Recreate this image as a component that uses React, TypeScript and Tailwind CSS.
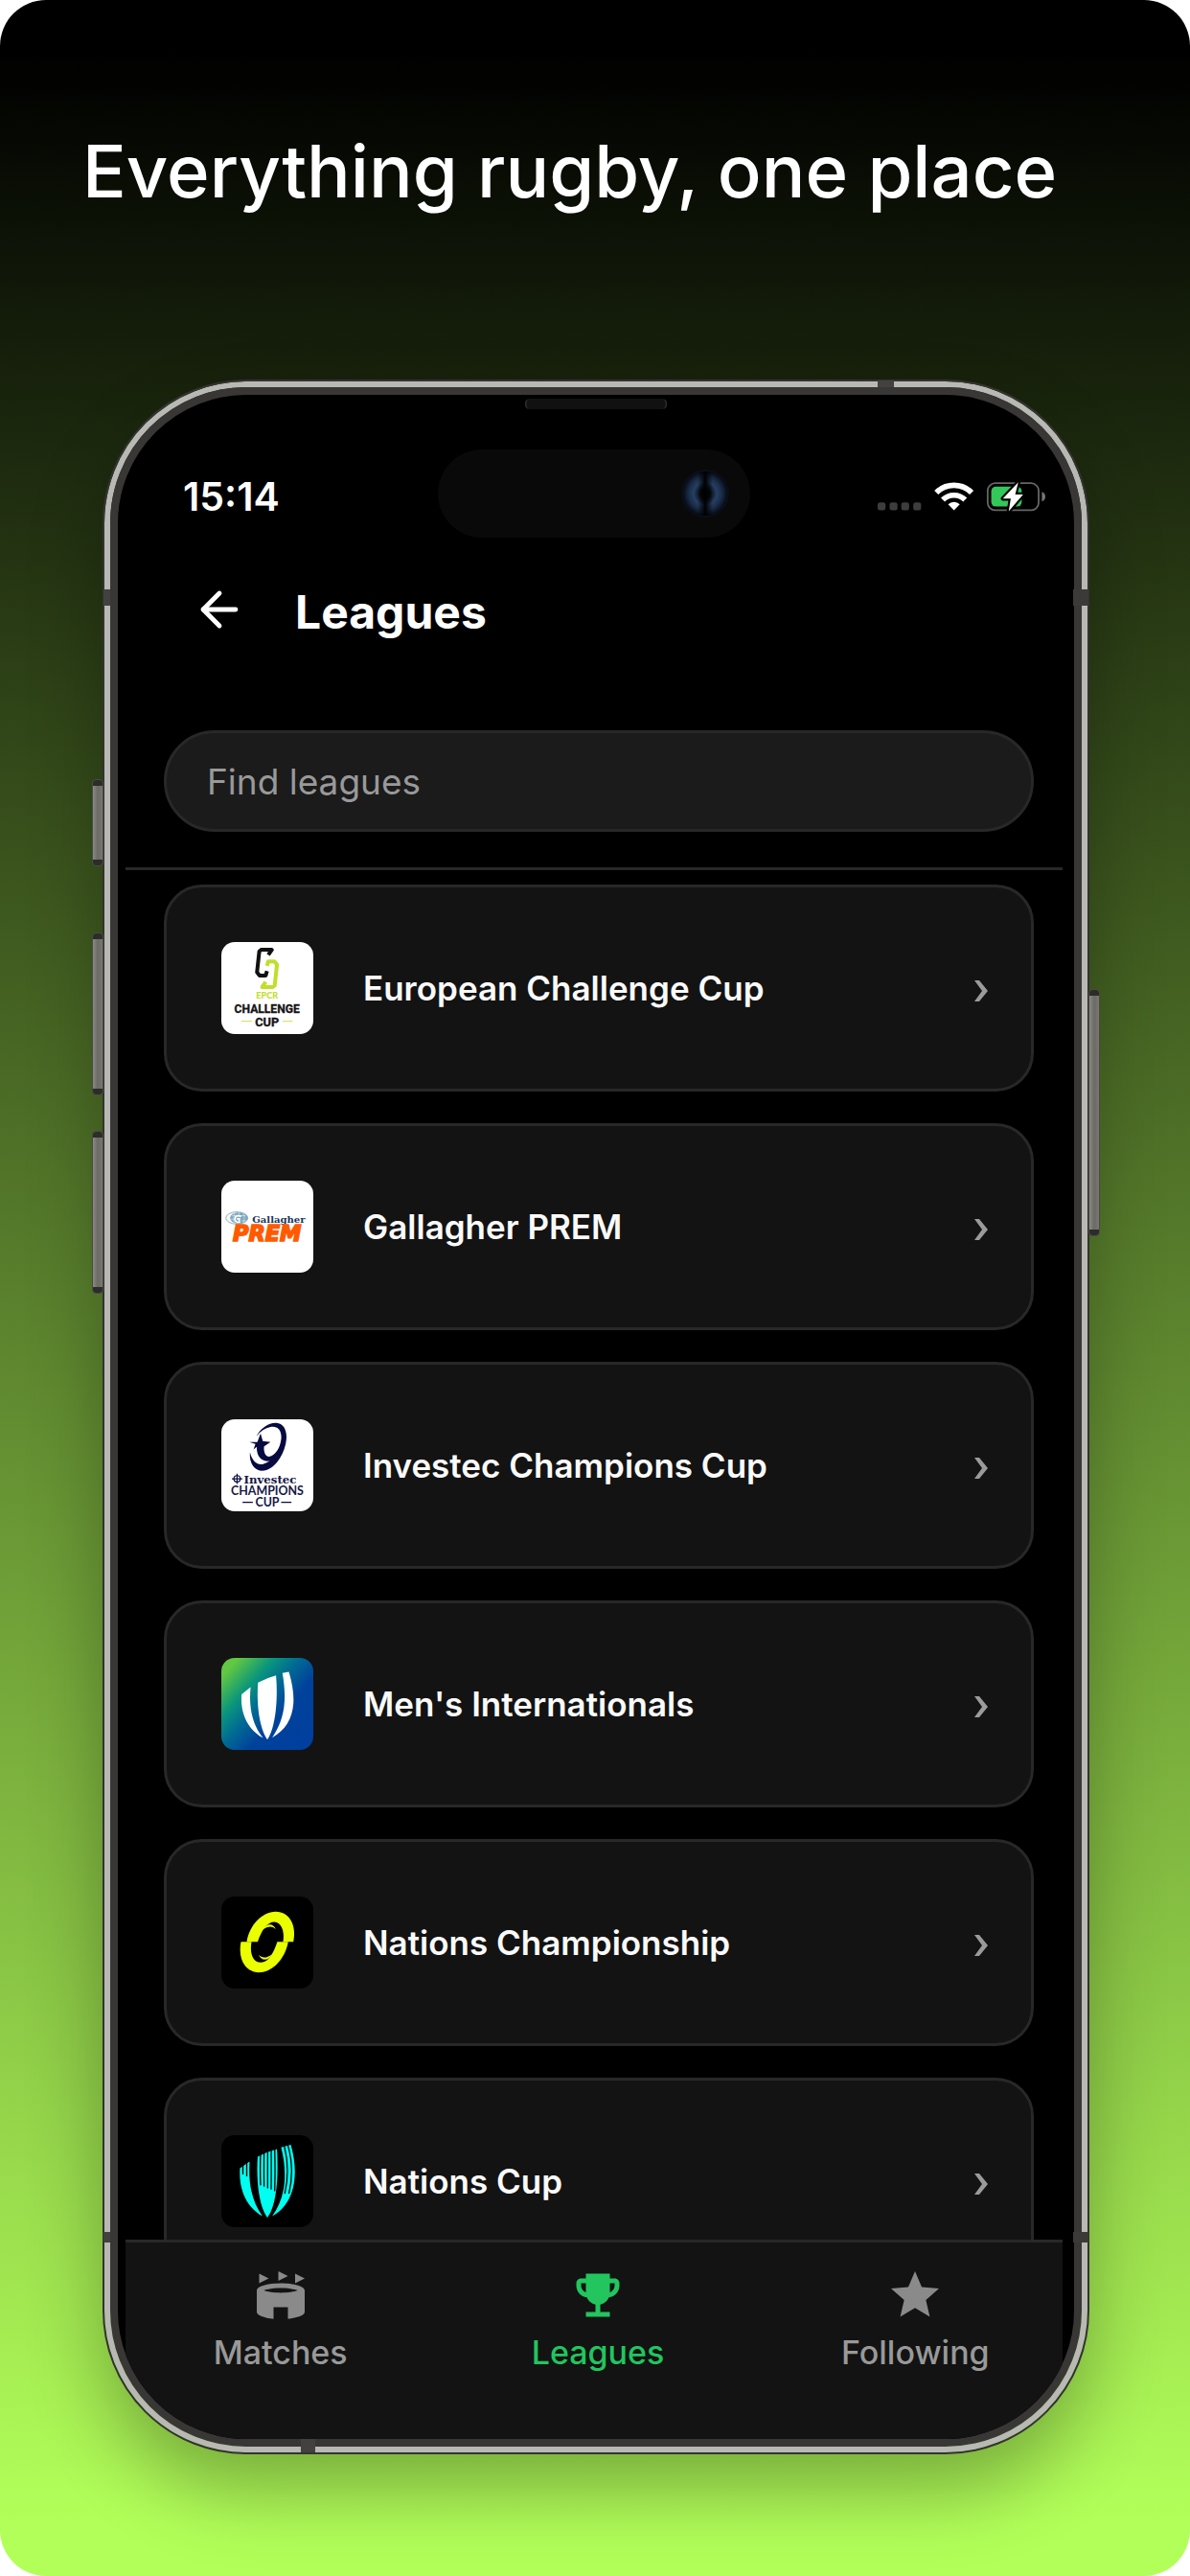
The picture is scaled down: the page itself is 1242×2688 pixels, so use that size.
import React from "react";
import { ArrowLeft } from "lucide-react";
import { MdEmojiEvents, MdStadium, MdStar } from "react-icons/md";

function ChallengeCupLogo() {
  return (
    <svg viewBox="64 70 286 286" className="size-full" aria-hidden="true">
      <rect x="64" y="70" width="286" height="286" fill="#fff" />
      <g fill="none" strokeWidth="12" strokeLinejoin="round">
        <path d="M210 110L221 94H188L182 99L175 164L183 174H202L206 160" stroke="#111" />
        <path d="M210 110L221 94H188L182 99L175 164L183 174H202L206 160" stroke="#c1de2b" transform="rotate(180 206 152)" />
      </g>
      <text x="206" y="247" textAnchor="middle" fontFamily="Lato, sans-serif" fontWeight="900" fontSize="27" fill="#c1de2b">EPCR</text>
      <text x="206" y="289" textAnchor="middle" fontFamily="Roboto, sans-serif" fontWeight="700" fontSize="36" fill="#151515" stroke="#151515" strokeWidth="1">CHALLENGE</text>
      <text x="206" y="332" textAnchor="middle" fontFamily="Roboto, sans-serif" fontWeight="700" fontSize="38" fill="#151515" stroke="#151515" strokeWidth="1">CUP</text>
      <path d="M126 316H159M254 316H286" stroke="#d5e66f" strokeWidth="4" />
    </svg>
  );
}

function PremLogo() {
  return (
    <svg viewBox="64 67 286 286" className="size-full" aria-hidden="true">
      <rect x="64" y="67" width="286" height="286" fill="#fff" />
      <ellipse cx="112" cy="183" rx="34" ry="19" fill="#f5f8fa" stroke="#8fa3b0" strokeWidth="2.5" />
      <ellipse cx="119" cy="183" rx="28" ry="18" fill="#7fa9c0" />
      <path d="M97 176H140M93 187H106M128 192H142M119 165V178M106 168Q99 182 104 197M133 168Q140 183 132 198" stroke="#d6e5ed" strokeWidth="2" fill="none" />
      <path d="M126 178Q108 172 106 185Q106 197 120 196V186H112" stroke="#fff" strokeWidth="5" fill="none" />
      <text x="160" y="198" fontFamily="'DejaVu Serif', serif" fontWeight="700" fontSize="30" fill="#17365c">Gallagher</text>
      <text x="206" y="255" textAnchor="middle" fontFamily="'DejaVu Sans', sans-serif" fontWeight="700" fontStyle="italic" fontSize="67" fill="#ff5a00" stroke="#ff5a00" strokeWidth="5">PREM</text>
    </svg>
  );
}

function ChampionsCupLogo() {
  return (
    <svg viewBox="64 64 286 286" className="size-full" aria-hidden="true">
      <rect x="64" y="64" width="286" height="286" fill="#fff" />
      <g fill="#080b3f">
        <path d="M173 117C186 91 211 74 235 75C261 77 272 104 264 141C255 184 224 224 190 224C164 223 151 198 153 167C160 195 176 207 194 203C224 195 246 159 250 126C253 99 239 84 217 88C200 91 186 101 173 117Z" />
        <path d="M186 108L193 132L217 135L197 148C195 163 200 180 213 180C230 178 249 151 256 119C257 156 233 193 207 194C184 193 174 176 174 150L164 158L170 141L151 135H176Z" />
      </g>
      <g fill="none" stroke="#080b3f" strokeWidth="3.5">
        <circle cx="113" cy="249" r="10" />
        <path d="M113 233V265M97 249H129" />
        <path d="M130 322H162M250 322H282" />
      </g>
      <text x="134" y="263" fontFamily="'DejaVu Serif', serif" fontWeight="700" fontSize="35" fill="#151746">Investec</text>
      <text x="207" y="299" textAnchor="middle" fontFamily="Lato, sans-serif" fontWeight="700" fontSize="37" fill="#151746">CHAMPIONS</text>
      <text x="207" y="335" textAnchor="middle" fontFamily="Lato, sans-serif" fontWeight="700" fontSize="37" fill="#151746">CUP</text>
    </svg>
  );
}

function InternationalsLogo() {
  return (
    <svg viewBox="64 61 286 286" className="size-full" aria-hidden="true">
      <defs>
        <linearGradient id="ocean" x1="0" y1="0.1" x2="0.9" y2="0.9">
          <stop offset="0.06" stopColor="#62c742" />
          <stop offset="0.3" stopColor="#0a967c" />
          <stop offset="0.48" stopColor="#006a93" />
          <stop offset="0.68" stopColor="#00429b" />
          <stop offset="1" stopColor="#003f9e" />
        </linearGradient>
      </defs>
      <rect x="64" y="61" width="286" height="286" fill="url(#ocean)" />
      <g fill="#fff">
        <path d="M127 174L155 152C149 215 160 268 194 310C148 284 122 237 127 174Z" />
        <path d="M178 138Q206 122 234 115C241 190 232 280 207 315C182 280 173 205 178 138Z" />
        <path d="M254 108L274 104C303 200 290 270 222 309C262 250 268 190 254 108Z" />
      </g>
    </svg>
  );
}

function NationsChampionshipLogo() {
  return (
    <svg viewBox="64 57 286 286" className="size-full" aria-hidden="true">
      <rect x="64" y="57" width="286" height="286" fill="#000" />
      <g fill="#eaff00">
        <path d="M143 198C152 145 190 105 233 104C277 104 299 148 288 198H256C262 165 250 136 229 136C207 136 190 160 177 198Z" />
        <path d="M125 198H158C151 235 163 262 186 262C209 262 225 237 238 198H272C262 250 224 293 181 293C137 292 115 250 125 198Z" />
        <path d="M193 160C203 141 224 137 233 158C222 148 209 148 193 160Z" />
        <path d="M221 237C211 256 190 260 180 239C191 249 205 249 221 237Z" />
      </g>
    </svg>
  );
}

function NationsCupLogo() {
  return (
    <svg viewBox="64 54 286 286" className="size-full" aria-hidden="true">
      <rect x="64" y="54" width="286" height="286" fill="#000" />
      <g fill="#00fff0">
        <path d="M122 157L152 136C147 205 160 262 192 306C147 280 117 230 122 157Z" />
        <path d="M177 121Q206 105 237 97C243 190 234 276 207 310C181 276 172 195 177 121Z" />
        <path d="M250 92L280 84C308 180 290 270 222 306C262 250 272 180 250 92Z" />
      </g>
      <g fill="none" stroke="#000" strokeWidth="4">
        <path d="M131 142V176M143 132V182" />
        <path d="M186 110Q184 165 186 210M197 105Q196 165 197 214M208 100V219M219 96Q220 165 219 223M230 94Q232 165 230 228" />
        <path d="M259 84Q279 160 261 236M270 82Q293 160 274 236" />
      </g>
    </svg>
  );
}

const leagues = [
  { name: "European Challenge Cup", Logo: ChallengeCupLogo },
  { name: "Gallagher PREM", Logo: PremLogo },
  { name: "Investec Champions Cup", Logo: ChampionsCupLogo },
  { name: "Men's Internationals", Logo: InternationalsLogo },
  { name: "Nations Championship", Logo: NationsChampionshipLogo },
  { name: "Nations Cup", Logo: NationsCupLogo },
];

const tabs = [
  { name: "Matches", Icon: MdStadium, active: false },
  { name: "Leagues", Icon: MdEmojiEvents, active: true },
  { name: "Following", Icon: MdStar, active: false },
];

function SideButton({ className }: { className: string }) {
  return (
    <div
      className={`absolute w-[10px] rounded-[3px] border-y-[6px] border-[#2c2c29] bg-linear-to-r from-[#8b8983] via-[#6c6a64] to-[#7a7872] outline-1 outline-[#4a4a45] ${className}`}
    />
  );
}

function StatusBar() {
  return (
    <div className="grid grid-cols-[1fr_326px_1fr] items-center pt-[57px]">
      <time className="pt-1.5 pl-[60px] text-[41px] leading-[48px] font-semibold text-white">15:14</time>
      <div className="flex h-[92px] items-center justify-end rounded-full bg-[#090909] pr-[22px]">
        <svg viewBox="0 0 50 50" className="size-[50px]" aria-hidden="true">
          <defs>
            <radialGradient id="lens">
              <stop offset="0.2" stopColor="#04070d" />
              <stop offset="0.5" stopColor="#263f63" />
              <stop offset="0.72" stopColor="#1a2c48" />
              <stop offset="1" stopColor="#05070c" />
            </radialGradient>
            <linearGradient id="slit">
              <stop offset="0" stopColor="#000" stopOpacity="0" />
              <stop offset="0.5" stopColor="#000" />
              <stop offset="1" stopColor="#000" stopOpacity="0" />
            </linearGradient>
          </defs>
          <circle cx="25" cy="25" r="24" fill="url(#lens)" stroke="#0a1020" strokeWidth="1.5" />
          <rect x="17" y="2" width="16" height="46" fill="url(#slit)" />
        </svg>
      </div>
      <div className="flex items-center justify-end pt-1.5 pr-[18px]">
        <svg viewBox="829 345 490 86" className="h-[31px] w-[175px]" aria-hidden="true">
          <g fill="#3d3d3d">
            <rect x="829" y="404" width="23" height="23" rx="7" />
            <rect x="864" y="404" width="23" height="23" rx="7" />
            <rect x="898" y="404" width="23" height="23" rx="7" />
            <rect x="933" y="404" width="23" height="23" rx="7" />
          </g>
          <g fill="none" stroke="#fff" strokeWidth="16">
            <path d="M1000.400 375.500A73 73 0 0 1 1103.600 375.500" />
            <path d="M1019.500 396.500A46 46 0 0 1 1084.500 396.500" />
          </g>
          <path d="M1052 427L1035 410A24 24 0 0 1 1069 410Z" fill="#fff" />
          <rect x="1150.500" y="348" width="149" height="79" rx="22" fill="none" stroke="#666" strokeWidth="5" />
          <rect x="1161" y="358" width="89" height="58" rx="13" fill="#34c759" />
          <path d="M1309 373Q1319 377 1319 387T1309 401Z" fill="#777" />
          <path d="M1240 345L1195 393H1218L1212 430L1254 381H1231Z" fill="#fff" stroke="#000" strokeWidth="12" strokeLinejoin="round" paintOrder="stroke" />
        </svg>
      </div>
    </div>
  );
}

function LeagueCard({ name, Logo }: { name: string; Logo: () => React.JSX.Element }) {
  return (
    <li className="shrink-0">
      <button
        type="button"
        className="flex h-[216px] w-full items-center rounded-[40px] border-3 border-[#282828] bg-[#131313] pr-[45px] pl-[57px] text-left"
      >
        <span className="size-24 shrink-0 overflow-hidden rounded-[14px]">
          <Logo />
        </span>
        <span className="ml-[52px] flex-1 text-[35px] leading-[44px] font-semibold text-[#fafafa]">{name}</span>
        <svg viewBox="0 0 14 22" className="mt-1.5 h-[22px] w-[14px]" aria-hidden="true">
          <path d="M0 0H5L14 11L5 22H0L8 11Z" fill="#9b9b9b" />
        </svg>
      </button>
    </li>
  );
}

export default function App() {
  return (
    <div className="bg-white font-[Inter,sans-serif]">
      <main className="flex h-screen flex-col overflow-hidden rounded-[48px] bg-linear-to-b/srgb from-black from-2% to-[#b2ff59] to-98% pb-[129px]">
        <h1 className="mt-[124px] px-[86px] text-[76px] leading-[108px] font-medium text-white">
          Everything rugby, one place
        </h1>

        <div className="relative mt-[166px] mr-[107px] ml-[109px] flex min-h-0 flex-1 flex-col">
          <SideButton className="top-[416px] -left-[12px] h-[89px]" />
          <SideButton className="top-[576px] -left-[12px] h-[168px]" />
          <SideButton className="top-[783px] -left-[12px] h-[168px]" />
          <SideButton className="top-[635px] -right-[12px] h-[256px]" />

          <div className="flex min-h-0 flex-1 flex-col rounded-[148px] border-[6px] border-[#b8b9b4] shadow-[0_40px_80px_rgba(0,0,0,0.3)] outline-2 outline-[#33332f]">
            <div className="relative flex min-h-0 flex-1 flex-col overflow-hidden rounded-[142px] border-8 border-[#393735] bg-black pr-3 pl-2">
              <div className="absolute top-1 left-1/2 h-[11px] w-[149px] -translate-x-1/2 rounded-full border-x-2 border-[#2a2a2a] bg-[#111]" />
              <StatusBar />

              <header className="flex h-[201px] items-start pt-[46px] pl-[69px]">
                <button type="button" aria-label="Back" className="text-white">
                  <ArrowLeft size={58} strokeWidth={2} />
                </button>
                <h2 className="ml-[50px] text-[48px] leading-[64px] font-bold text-white">Leagues</h2>
              </header>

              <div className="border-b-3 border-[#282828] pr-[30px] pb-[37px] pl-10">
                <input
                  type="text"
                  aria-label="Find leagues"
                  placeholder="Find leagues"
                  className="block h-[106px] w-full rounded-full border-3 border-[#282828] bg-[#1b1b1b] px-[42px] text-[37px] text-white placeholder:text-[#999]"
                />
              </div>

              <ul className="flex min-h-0 flex-1 flex-col gap-[33px] overflow-hidden pt-[15px] pr-[30px] pl-10">
                {leagues.map((league) => (
                  <LeagueCard key={league.name} {...league} />
                ))}
              </ul>

              <nav className="h-[208px] shrink-0 border-t-3 border-[#282828] bg-[#131313] pt-[25px]">
                <div className="-mr-3 -ml-1 grid grid-cols-3">
                  {tabs.map(({ name, Icon, active }) => (
                    <a
                      key={name}
                      href={`#${name.toLowerCase()}`}
                      aria-current={active ? "page" : undefined}
                      className={`flex flex-col items-center gap-2.5 text-[34px] leading-[40px] font-medium ${active ? "text-[#22c55e]" : "text-[#999]"}`}
                    >
                      <Icon size={60} className={active ? "text-[#22c55e]" : "text-[#8a8a8a]"} />
                      {name}
                    </a>
                  ))}
                </div>
              </nav>
            </div>
          </div>

          <div className="absolute -top-px right-[202px] h-[7px] w-[17px] bg-[#434140]" />
          <div className="absolute top-[217px] -left-px h-[17px] w-[7px] bg-[#434140]" />
          <div className="absolute top-[217px] -right-px h-[17px] w-4 bg-[#3c3a39]" />
          <div className="absolute bottom-[219px] -left-px h-[11px] w-[7px] bg-[#434140]" />
          <div className="absolute -right-px bottom-[219px] h-[11px] w-4 bg-[#3c3a39]" />
          <div className="absolute bottom-0 left-[205px] h-[14px] w-[15px] bg-[#434140]" />
        </div>
      </main>
    </div>
  );
}
